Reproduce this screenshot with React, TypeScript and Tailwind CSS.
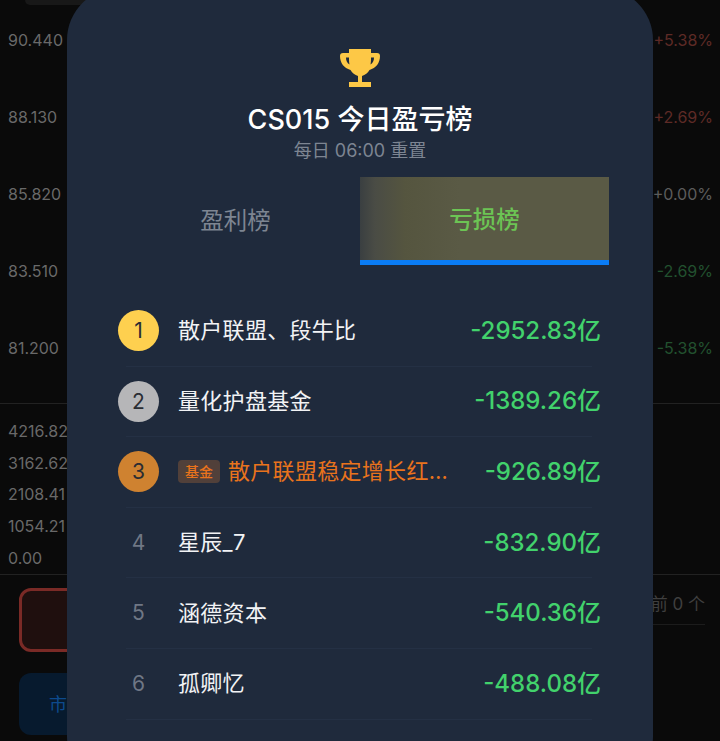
import { Fragment } from 'react';

const FONT = "font-['Inter','Noto_Sans_CJK_SC',sans-serif]";

const priceRows = [
  { price: '90.440', pct: '+5.38%', color: 'text-[#5e2a26]' },
  { price: '88.130', pct: '+2.69%', color: 'text-[#5e2a26]' },
  { price: '85.820', pct: '+0.00%', color: 'text-[#5c5c5c]' },
  { price: '83.510', pct: '-2.69%', color: 'text-[#22512f]' },
  { price: '81.200', pct: '-5.38%', color: 'text-[#22512f]' },
];

const volumes = ['4216.82', '3162.62', '2108.41', '1054.21', '0.00'];

const rows = [
  { rank: 1, name: '散户联盟、段牛比', value: '-2952.83亿', medal: 'bg-[#fed04f]' },
  { rank: 2, name: '量化护盘基金', value: '-1389.26亿', medal: 'bg-[#b6b6b8]' },
  { rank: 3, name: '散户联盟稳定增长红利基金', value: '-926.89亿', medal: 'bg-[#cf8230]', fund: true },
  { rank: 4, name: '星辰_7', value: '-832.90亿' },
  { rank: 5, name: '涵德资本', value: '-540.36亿' },
  { rank: 6, name: '孤卿忆', value: '-488.08亿' },
];

function Trophy() {
  return (
    <svg width="40" height="40" viewBox="0 0 40 40" className="block" fill="#fdc846">
      <path
        fillRule="evenodd"
        d="M9 1H31V5H37C39 5 40 6 40 8C40 15 36 20 29.500 22C28 25 25 27 22 28V34H31V39H9V34H18V28C15 27 12 25 10.500 22C4 20 0 15 0 8C0 6 1 5 3 5H9ZM6 9.500C6 12.500 7 15 9.500 16.500C9 14 9 12 9 9.500ZM34 9.500H31C31 12 31 14 30.500 16.500C33 15 34 12.500 34 9.500Z"
      />
    </svg>
  );
}

export default function App() {
  return (
    <div className={`${FONT} relative w-[720px] h-[741px] overflow-hidden bg-[#0a0a0a]`}>
      {/* page behind the dialog */}
      <div className="ml-[25px] -mb-[4px] h-[5px] w-[90px] rounded-b-[8px] bg-[#181818]" />
      <div className="h-[403px] border-b border-[#222222]">
        {priceRows.map((r) => (
          <div key={r.price} className="flex h-[77px] items-center justify-between pl-2 pr-[7px] text-[16px]">
            <span className="text-[#696969]">{r.price}</span>
            <span className={r.color}>{r.pct}</span>
          </div>
        ))}
      </div>
      <div className="h-[171px] border-b border-[#222222] pt-[11px]">
        {volumes.map((v) => (
          <div key={v} className="flex h-[31.700px] items-center pl-2 text-[16px] text-[#696969]">
            {v}
          </div>
        ))}
      </div>
      <div className="flex justify-between pl-[19px] pr-[15px] pt-[13px]">
        <div className="h-[64px] w-[200px] rounded-[12px] border-[3px] border-[#7a2a26] bg-[#1f0f0e]" />
        <div className="h-[37px] w-[180px] border-b border-[#1c1c1c] pt-[4px] text-right text-[17px] text-[#3f3f3f]">前 0 个</div>
      </div>
      <div className="pl-[19px] pt-[21px]">
        <div className="flex h-[62px] w-[200px] items-center rounded-[12px] bg-[#071a2e] pl-[30px] text-[18px] text-[#0d4a8c]">市价</div>
      </div>

      {/* dialog */}
      <div className="absolute left-[67px] top-[-12px] h-[800px] w-[586px] rounded-[52px] bg-[#1f2a3c] px-[44px]">
        <div className="flex justify-center pt-[60px]">
          <Trophy />
        </div>
        <div className="mt-[15px] text-center text-[27px] leading-[34px] font-medium text-white">CS015 今日盈亏榜</div>
        <div className="mt-[3px] text-center text-[18px] leading-[22px] text-[#7d8592]">每日 06:00 重置</div>
        <div className="mt-[15px] flex">
          <div className="flex h-[88px] w-[249px] items-center justify-center text-[23.500px] text-[#7d8592]">盈利榜</div>
          <div className="flex h-[88px] w-[249px] items-center justify-center border-b-[5px] border-[#0a7cf5] bg-[linear-gradient(90deg,#3a3f41_0%,#4a4c45_6%,#55553f_18%,#5a5a45_40%,#5a5a45_100%)] pt-[3px] text-[23.500px] font-medium text-[#6cc454]">
            亏损榜
          </div>
        </div>
        <div className="mt-[31px] pl-[15px] pr-[17px]">
          {rows.map((r) => (
            <Fragment key={r.rank}>
              <div className="flex h-[70.600px] items-center border-b border-[#243044]">
                {r.medal ? (
                  <div className={`ml-[-8px] mr-[19px] flex h-[41px] w-[41px] shrink-0 items-center justify-center rounded-full text-[21px] text-[#2a2d33] ${r.medal}`}>
                    {r.rank}
                  </div>
                ) : (
                  <div className="ml-[-8px] mr-[19px] w-[41px] shrink-0 text-center text-[21px] text-[#6f7785]">{r.rank}</div>
                )}
                <div className={`flex min-w-0 flex-1 items-center ${r.fund ? 'text-[#e9731c]' : 'text-[#f2f3f5]'}`}>
                  {r.fund && (
                    <span className="mr-[8px] shrink-0 rounded-[4px] bg-[#51403a] px-[7px] py-[2px] text-[14px] leading-[19px] font-medium text-[#e9731c]">
                      基金
                    </span>
                  )}
                  <span className="w-0 flex-1 truncate pr-[28px] text-[22px] tracking-[0.3px]">{r.name}</span>
                </div>
                <div className="mr-[-9px] shrink-0 text-[24px] font-medium text-[#42d26c]">{r.value}</div>
              </div>
            </Fragment>
          ))}
        </div>
      </div>
    </div>
  );
}
